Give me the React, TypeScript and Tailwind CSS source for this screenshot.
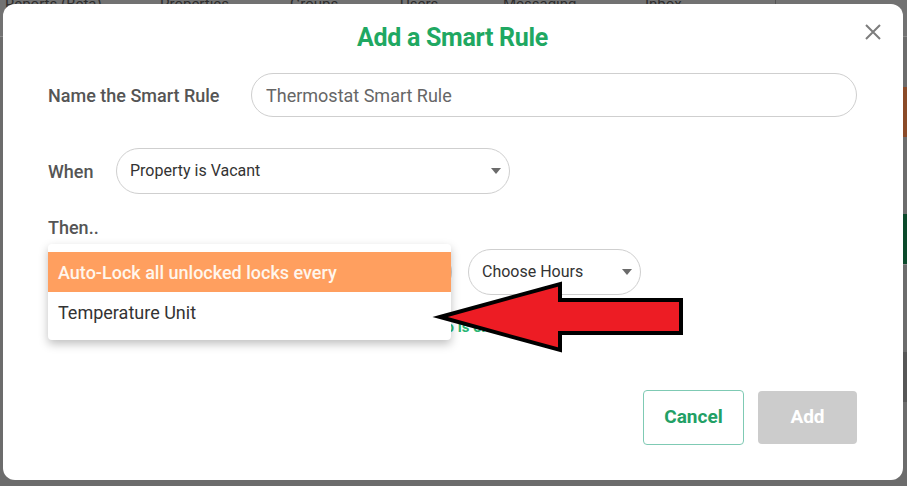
import { useState } from 'react';

const font = { fontFamily: 'Roboto, "Noto Sans", Arial, sans-serif' };

const Caret = () => (
	<svg width="10" height="6" viewBox="0 0 10 6" className="shrink-0">
		<path d="M0 0 L10 0 L5 6 Z" fill="#6b6b6b" />
	</svg>
);

const navItems = [
	{ label: 'Reports (Beta)', w: 'w-[155px]' },
	{ label: 'Properties', w: 'w-[130px]' },
	{ label: 'Groups', w: 'w-[110px]' },
	{ label: 'Users', w: 'w-[103px]' },
	{ label: 'Messaging', w: 'w-[142px]' },
	{ label: 'Inbox', w: 'w-[130px]' },
];

const App = () => {
	const [name, setName] = useState('Thermostat Smart Rule');

	return (
		<div style={font} className="relative w-[907px] h-[486px] overflow-hidden bg-[#6c6c6c]">
			{/* page behind the backdrop */}
			<div className="flex flex-col h-full">
				<div className="flex items-start h-[37px] border-b border-[#8a8a8a] bg-[#727272] px-[5px] text-[15px] leading-[8px] text-[#2e2e2e]">
					{navItems.map(n => (
						<div key={n.label} className={n.w}>
							{n.label}
						</div>
					))}
					<div className="h-[10px] border-l border-[#555]" />
				</div>
				<div className="flex flex-col items-end">
					<div className="w-[6px] h-[50px] mt-[50px] bg-[#8a4a28]" />
					<div className="w-[6px] h-[50px] mt-[77px] bg-[#0b4a2b]" />
					<div className="w-[6px] h-[70px] border-t border-[#8a8a8a]" />
					<div className="w-[6px] h-[50px] mt-[18px] bg-[#575757]" />
				</div>
			</div>

			{/* modal */}
			<div className="absolute inset-0 flex items-start pl-[3px] pt-[4px]">
				<div className="relative w-[900px] h-[476px] rounded-[12px] bg-white pt-[18px] pl-[45px] pr-[46px]">
					<button className="absolute right-[20px] top-[18px] w-[20px] h-[20px] flex items-center justify-center">
						<svg width="16" height="16" viewBox="0 0 16 16">
							<path d="M1 1 L15 15 M15 1 L1 15" stroke="#7d7d7d" strokeWidth="2" />
						</svg>
					</button>
					<h2 className="text-center text-[25px] leading-[32px] font-bold text-[#1fa862] tracking-[-0.3px]">
						Add a Smart Rule
					</h2>

					<div className="flex items-center mt-[19px]">
						<label className="w-[203px] text-[18px] font-medium text-[#555]">Name the Smart Rule</label>
						<input
							value={name}
							onChange={e => setName(e.target.value)}
							className="flex-1 h-[44px] rounded-full border border-[#cfcfcf] px-[14px] text-[18px] text-[#666] outline-none"
						/>
					</div>

					<div className="flex items-center mt-[31px]">
						<label className="w-[68px] text-[18px] font-medium text-[#555]">When</label>
						<div className="w-[394px] h-[46px] rounded-full border border-[#cfcfcf] flex items-center justify-between pl-[13px] pr-[8px]">
							<span className="text-[16px] text-[#333]">Property is Vacant</span>
							<Caret />
						</div>
					</div>

					<div className="mt-[22px] text-[18px] leading-[24px] font-medium text-[#555]">Then..</div>

					<div className="relative pt-[9px]">
						<div className="flex items-center gap-[16px]">
							<div className="w-[404px] h-[46px] rounded-full border border-[#cfcfcf] flex items-center justify-between pl-[13px] pr-[8px]">
								<span className="text-[16px] text-[#333]">Auto-Lock all unlocked</span>
								<Caret />
							</div>
							<div className="w-[173px] h-[46px] rounded-full border border-[#cfcfcf] flex items-center justify-between pl-[13px] pr-[8px]">
								<span className="text-[16px] text-[#333]">Choose Hours</span>
								<Caret />
							</div>
						</div>
						<div className="mt-[22px] text-[15px] leading-[20px] font-bold text-[#2bb673] pl-[306px]">
							Auto-Lock info is on
						</div>

						{/* open dropdown */}
						<ul className="absolute left-0 top-[4px] w-[403px] py-[8px] rounded-[4px] bg-white shadow-[0_4px_10px_rgba(0,0,0,0.25)]">
							<li className="h-[40px] flex items-center px-[10px] bg-[#ff9f5f] text-[18px] font-medium text-[#fff6ec]">
								Auto-Lock all unlocked locks every
							</li>
							<li className="h-[40px] flex items-center px-[10px] text-[18px] text-[#333]">Temperature Unit</li>
						</ul>
					</div>

					<div className="flex justify-end gap-[14px] mt-[53px]">
						<button className="w-[101px] h-[55px] rounded-[4px] border border-[#7fcab4] text-[19px] font-bold text-[#22a065]">
							Cancel
						</button>
						<button className="w-[99px] h-[53px] mt-[1px] rounded-[4px] bg-[#cccccc] text-[19px] font-bold text-white">
							Add
						</button>
					</div>
				</div>
			</div>

			{/* annotation arrow */}
			<svg className="absolute inset-0 pointer-events-none" width="907" height="486">
				<polygon
					points="440,317 560,284 560,300 681,300 681,333 560,333 560,350"
					fill="#ed1c24"
					stroke="#000"
					strokeWidth="4"
					strokeLinejoin="miter"
					strokeMiterlimit="10"
				/>
			</svg>
		</div>
	);
};

export default App;
